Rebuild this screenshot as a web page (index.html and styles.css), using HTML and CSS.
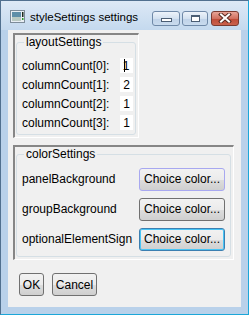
FILE: index.html
```html
<!DOCTYPE html>
<html lang="en">
<head>
  <meta charset="UTF-8">
  <title>styleSettings settings</title>
  <link rel="stylesheet" href="styles.css">
</head>
<body>

  <div class="window">

    <!-- Title bar -->
    <div class="titlebar">
      <svg class="app-icon" width="15" height="13" viewBox="0 0 15 13">
        <rect x="0.5" y="0.5" width="14" height="12" fill="#e8eef3" stroke="#7d8c99"/>
        <rect x="2" y="2" width="9" height="9" fill="#5f8fa8"/>
        <rect x="2" y="7" width="9" height="4" fill="#b9c9c2"/>
        <rect x="12" y="2" width="1.5" height="5" fill="#1c2a1c"/>
        <rect x="12" y="8" width="1.5" height="2" fill="#2f9c2f"/>
      </svg>
      <span class="title">styleSettings settings</span>
      <div class="caption-buttons">
        <div class="cap cap-min"><span class="min-glyph"></span></div>
        <div class="cap cap-max"><span class="max-glyph"></span></div>
        <div class="cap cap-close">
          <svg width="14" height="10" viewBox="0 0 14 10">
            <path d="M3 1.5 L11 8.5 M11 1.5 L3 8.5" stroke="#5a2a22" stroke-width="4" stroke-linecap="square"/>
            <path d="M3 1.5 L11 8.5 M11 1.5 L3 8.5" stroke="#ffffff" stroke-width="2" stroke-linecap="square"/>
          </svg>
        </div>
      </div>
    </div>

    <!-- Client area -->
    <div class="client">

      <div class="bevel layout-box">
        <fieldset class="group">
          <legend>layoutSettings</legend>
          <div class="count-row"><span>columnCount[0]:</span><span class="val"><span class="caret"></span>1</span></div>
          <div class="count-row"><span>columnCount[1]:</span><span class="val">2</span></div>
          <div class="count-row"><span>columnCount[2]:</span><span class="val">1</span></div>
          <div class="count-row"><span>columnCount[3]:</span><span class="val">1</span></div>
        </fieldset>
      </div>

      <div class="bevel color-box">
        <fieldset class="group">
          <legend>colorSettings</legend>
          <div class="color-row"><span>panelBackground</span><button class="btn choice hover">Choice color...</button></div>
          <div class="color-row"><span>groupBackground</span><button class="btn choice">Choice color...</button></div>
          <div class="color-row"><span>optionalElementSign</span><button class="btn choice focus">Choice color...</button></div>
        </fieldset>
      </div>

      <div class="actions">
        <button class="btn ok">OK</button>
        <button class="btn cancel">Cancel</button>
      </div>

    </div>
  </div>

</body>
</html>
```

FILE: styles.css
```css
body {
  margin: 0;
  font-family: "Liberation Sans", Arial, sans-serif;
  font-size: 12px;
  color: #000;
}

.window {
  width: 249px;
  height: 315px;
  box-sizing: border-box;
  border: 1px solid;
  border-color: #51708f #1ba6d8 #1ba6d8 #51708f;
  background: linear-gradient(#dde9f6, #c4d9ee 29px, #b9d1ea 29px);
  padding: 0 7px 7px;
  display: flex;
  flex-direction: column;
}

/* Title bar */
.titlebar {
  height: 29px;
  display: flex;
  align-items: center;
  padding-left: 2px;
}

.app-icon {
  margin-top: 2px;
}

.title {
  margin-left: 5px;
  font-size: 11.5px;
  margin-top: 2px;
}

.caption-buttons {
  margin-left: auto;
  margin-right: 2px;
  margin-top: 5px;
  display: flex;
  gap: 2px;
}

.cap {
  height: 15px;
  box-sizing: border-box;
  border: 1px solid #6f89a8;
  border-radius: 3px;
  background: linear-gradient(#edf3fa, #d3e1f0 50%, #bfd2e8 51%, #c9dbee);
  display: flex;
  align-items: center;
  justify-content: center;
}

.cap-min { width: 28px; }
.cap-max { width: 26px; }

.cap-close {
  width: 28px;
  margin-left: 1px;
  border-color: #7a3a30;
  background: linear-gradient(#e8a497, #d1705f 50%, #bf4a36 51%, #c9614c);
}

.min-glyph {
  width: 9px;
  height: 2px;
  margin-top: 4px;
  background: #fff;
  border: 1px solid #4b5e74;
}

.max-glyph {
  width: 7px;
  height: 4px;
  background: #fff;
  border: 1px solid #4b5e74;
  border-top-width: 2px;
}

/* Client */
.client {
  flex: 1;
  background: #f0f0f0;
  padding: 3px 0 0 5px;
}

.bevel {
  box-sizing: border-box;
  border-style: solid;
  border-width: 2px 1px 1px 2px;
  border-color: #868686 #ffffff #ffffff #868686;
  padding: 0 2px 2px 1px;
  display: flex;
}

.layout-box {
  width: 126px;
  height: 105px;
}

.color-box {
  width: 221px;
  height: 115px;
  margin-top: 7px;
}

.group {
  flex: 1;
  margin: 0;
  border: 1px solid #d5dfe5;
  border-radius: 3px;
  padding: 0 0 0 5px;
}

.group legend {
  padding: 0 2px;
  margin-left: 2px;
}

.count-row {
  display: flex;
  align-items: center;
  justify-content: space-between;
  height: 19px;
  padding-right: 2px;
}

.count-row:first-of-type {
  margin-top: 7px;
}

.val {
  width: 13px;
  height: 15px;
  background: #fff;
  display: flex;
  align-items: center;
  justify-content: center;
}

.caret {
  width: 1px;
  height: 13px;
  background: #000;
  margin-right: -2px;
}

.color-row {
  display: flex;
  align-items: center;
  justify-content: space-between;
  height: 30px;
  padding-right: 5px;
}

.color-row:first-of-type {
  margin-top: 3px;
}

.btn {
  font-family: "Liberation Sans", Arial, sans-serif;
  font-size: 12px;
  height: 23px;
  padding: 0;
  white-space: nowrap;
  border: 1px solid #707070;
  border-radius: 3px;
  background: linear-gradient(#f2f2f2, #ebebeb 50%, #dddddd 51%, #cfcfcf);
  color: #000;
}

.choice {
  width: 86px;
}

.btn.hover {
  border-color: #a8a8f0;
}

.btn.focus {
  border-color: #3c7fb1;
  box-shadow: inset 0 0 0 1px #48c5f5;
}

.actions {
  display: flex;
  gap: 8px;
  margin-top: 13px;
  padding-left: 6px;
}

.ok {
  width: 25px;
}

.cancel {
  width: 45px;
}
```
